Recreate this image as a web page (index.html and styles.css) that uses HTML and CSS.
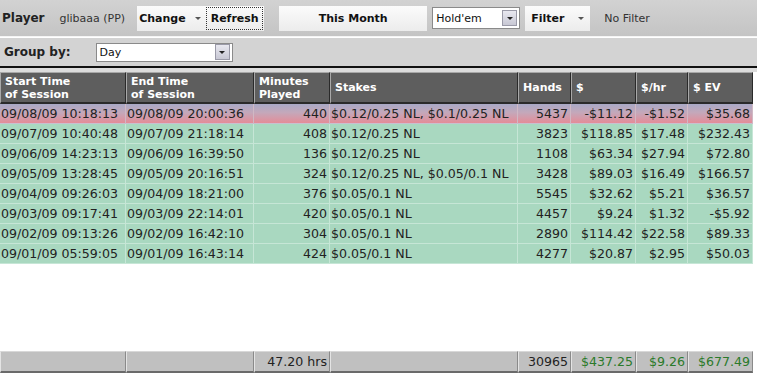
FILE: index.html
```html
<!DOCTYPE html>
<html lang="en">
<head>
  <meta charset="UTF-8">
  <title>Sessions</title>
  <link rel="stylesheet" href="styles.css">
</head>
<body>
  <!-- Top toolbar -->
  <div class="toolbar">
    <span class="label">Player</span>
    <span class="player-name">glibaaa (PP)</span>
    <div class="btn-group">
      <span class="tb-btn change">Change <span class="caret"></span></span>
      <span class="tb-btn refresh">Refresh</span>
    </div>
    <span class="tb-btn month">This Month</span>
    <div class="select game"><span class="select-text">Hold'em</span><span class="select-arrow"><span class="caret dark"></span></span></div>
    <span class="tb-btn filter">Filter <span class="caret wide"></span></span>
    <span class="filter-text">No Filter</span>
  </div>

  <div class="groupbar">
    <span class="label">Group by:</span>
    <div class="select group"><span class="select-text">Day</span><span class="select-arrow"><span class="caret dark"></span></span></div>
  </div>

  <div class="gap"></div>

  <table class="sessions">
    <colgroup>
      <col style="width:126px">
      <col style="width:128px">
      <col style="width:76px">
      <col style="width:188px">
      <col style="width:53px">
      <col style="width:65px">
      <col style="width:52px">
      <col style="width:65px">
    </colgroup>
    <thead>
      <tr>
        <th>Start Time<br>of Session</th>
        <th>End Time<br>of Session</th>
        <th>Minutes<br>Played</th>
        <th>Stakes</th>
        <th>Hands</th>
        <th>$</th>
        <th>$/hr</th>
        <th>$ EV</th>
      </tr>
    </thead>
    <tbody>
      <tr class="loss">
        <td>09/08/09 10:18:13</td><td>09/08/09 20:00:36</td><td class="num">440</td>
        <td>$0.12/0.25 NL, $0.1/0.25 NL</td><td class="num">5437</td><td class="num">-$11.12</td><td class="num">-$1.52</td><td class="num">$35.68</td>
      </tr>
      <tr>
        <td>09/07/09 10:40:48</td><td>09/07/09 21:18:14</td><td class="num">408</td>
        <td>$0.12/0.25 NL</td><td class="num">3823</td><td class="num">$118.85</td><td class="num">$17.48</td><td class="num">$232.43</td>
      </tr>
      <tr>
        <td>09/06/09 14:23:13</td><td>09/06/09 16:39:50</td><td class="num">136</td>
        <td>$0.12/0.25 NL</td><td class="num">1108</td><td class="num">$63.34</td><td class="num">$27.94</td><td class="num">$72.80</td>
      </tr>
      <tr>
        <td>09/05/09 13:28:45</td><td>09/05/09 20:16:51</td><td class="num">324</td>
        <td>$0.12/0.25 NL, $0.05/0.1 NL</td><td class="num">3428</td><td class="num">$89.03</td><td class="num">$16.49</td><td class="num">$166.57</td>
      </tr>
      <tr>
        <td>09/04/09 09:26:03</td><td>09/04/09 18:21:00</td><td class="num">376</td>
        <td>$0.05/0.1 NL</td><td class="num">5545</td><td class="num">$32.62</td><td class="num">$5.21</td><td class="num">$36.57</td>
      </tr>
      <tr>
        <td>09/03/09 09:17:41</td><td>09/03/09 22:14:01</td><td class="num">420</td>
        <td>$0.05/0.1 NL</td><td class="num">4457</td><td class="num">$9.24</td><td class="num">$1.32</td><td class="num">-$5.92</td>
      </tr>
      <tr>
        <td>09/02/09 09:13:26</td><td>09/02/09 16:42:10</td><td class="num">304</td>
        <td>$0.05/0.1 NL</td><td class="num">2890</td><td class="num">$114.42</td><td class="num">$22.58</td><td class="num">$89.33</td>
      </tr>
      <tr>
        <td>09/01/09 05:59:05</td><td>09/01/09 16:43:14</td><td class="num">424</td>
        <td>$0.05/0.1 NL</td><td class="num">4277</td><td class="num">$20.87</td><td class="num">$2.95</td><td class="num">$50.03</td>
      </tr>
      <tr class="filler"><td colspan="8"></td></tr>
    </tbody>
    <tfoot>
      <tr>
        <td></td><td></td><td class="num">47.20 hrs</td><td></td>
        <td class="num">30965</td><td class="num pos">$437.25</td><td class="num pos">$9.26</td><td class="num pos">$677.49</td>
      </tr>
    </tfoot>
  </table>
</body>
</html>
```

FILE: styles.css
```css
/* General styles */
body {
  margin: 0;
  padding: 0;
  font-family: 'DejaVu Sans', Verdana, sans-serif;
  background: #fff;
  color: #222;
}

/* Toolbar */
.toolbar {
  height: 36px;
  display: flex;
  align-items: center;
  background: linear-gradient(#d2d2d2, #c4c4c4);
  border-bottom: 1px solid #f4f4f4;
}

.label {
  font-size: 12px;
  font-weight: bold;
  color: #222;
  margin-left: 2px;
}

.player-name {
  font-size: 11px;
  color: #333;
  margin-left: 15px;
}

.btn-group {
  display: flex;
  align-items: center;
  height: 25px;
  margin-left: 12px;
  background: linear-gradient(#fbfbfb, #ececec);
  padding-right: 1px;
}

.tb-btn {
  display: flex;
  align-items: center;
  justify-content: center;
  height: 25px;
  box-sizing: border-box;
  font-size: 11px;
  font-weight: bold;
  color: #111;
  background: linear-gradient(#fbfbfb, #ececec);
}

.change {
  width: 69px;
  padding-left: 2px;
  justify-content: flex-start;
}

.refresh {
  width: 57px;
  height: 23px;
  border: 1px dotted #333;
  background: none;
}

.month {
  width: 148px;
  margin-left: 15px;
}

.filter {
  width: 65px;
  margin-left: 5px;
  justify-content: flex-start;
  padding-left: 6px;
}

.filter-text {
  font-size: 11px;
  color: #333;
  margin-left: 14px;
}

.caret {
  display: inline-block;
  width: 0;
  height: 0;
  margin-left: 9px;
  border-left: 3px solid transparent;
  border-right: 3px solid transparent;
  border-top: 3px solid #555;
}

.caret.wide {
  margin-left: 14px;
}

.caret.dark {
  margin-left: 0;
  border-top-color: #222;
}

/* Select boxes */
.select {
  display: flex;
  align-items: center;
  box-sizing: border-box;
  background: #fff;
  border: 1px solid #8a8a8a;
  font-size: 11px;
  color: #111;
}

.select-text {
  flex: 1;
  padding-left: 3px;
}

.select-arrow {
  display: flex;
  align-items: center;
  justify-content: center;
  width: 13px;
  height: 14px;
  margin-right: 2px;
  background: linear-gradient(#e8e8f0, #c8c8d4);
  border: 1px solid #9a9aa8;
}

.game {
  width: 88px;
  height: 22px;
  margin-left: 5px;
}

.group {
  width: 137px;
  height: 19px;
  margin-left: 25px;
}

/* Group by bar */
.groupbar {
  height: 28px;
  margin-top: 1px;
  display: flex;
  align-items: center;
  background: #d3d3d3;
  border-bottom: 2px solid #111;
}

.groupbar .label {
  margin-left: 4px;
}

.gap {
  height: 4px;
  background: #dcdcdc;
}

/* Session table */
.sessions {
  width: 753px;
  table-layout: fixed;
  border-collapse: separate;
  border-spacing: 0;
  font-size: 12.6px;
}

.sessions th {
  height: 29px;
  padding: 0 0 0 4px;
  text-align: left;
  vertical-align: middle;
  font-size: 11px;
  line-height: 13px;
  font-weight: bold;
  color: #fff;
  background: #5e5e5e;
  border-top: 1px solid #a8a8a8;
  border-left: 1px solid #a8a8a8;
  border-right: 1px solid #2a2a2a;
  border-bottom: 2px solid #2a2a2a;
  white-space: nowrap;
}

.sessions td {
  height: 19px;
  padding: 0 2px 0 1px;
  line-height: 19px;
  white-space: nowrap;
  overflow: hidden;
  background: #a9d8c0;
  border-right: 1px solid #c6e6d6;
  border-bottom: 1px solid #c6e6d6;
}

.sessions td.num {
  text-align: right;
}

.sessions tr.loss td {
  background: linear-gradient(#a9a9c6, #c4a8ba 45%, #e48c98);
  border-right-color: #d0b8c4;
  border-bottom-color: #c8c0d0;
}

.sessions tr.filler td {
  height: 87px;
  background: #fff;
  border: none;
}

.sessions tfoot td {
  height: 19px;
  background: #c0c0c0;
  border-top: 1px solid #d8d8d8;
  border-left: 1px solid #e4e4e4;
  border-right: 1px solid #8a8a8a;
  border-bottom: 2px solid #6a6a6a;
  color: #222;
}

.sessions tfoot td.pos {
  color: #2b7a2b;
}
```
